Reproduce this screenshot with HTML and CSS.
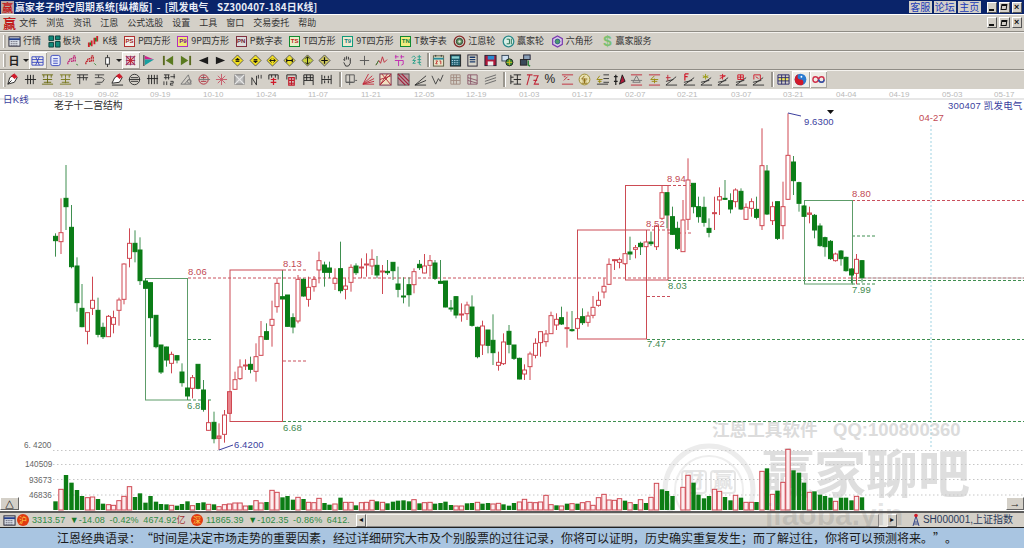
FILE: index.html
```html
<!DOCTYPE html>
<html lang="zh">
<head>
<meta charset="utf-8">
<title>赢家老子时空周期系统</title>
<link rel="stylesheet" href="styles.css">
</head>
<body>
<div class="app">
  <header class="title">
    <span class="logo">赢</span>
    <span class="title-text">赢家老子时空周期系统[纵横版] - [凯发电气  SZ300407-184日K线]</span>
    <span class="links"><a>客服</a><a>论坛</a><a>主页</a></span>
    <span class="wins"><b class="wb"><i class="min"></i></b><b class="wb"><i class="res"></i></b><b class="wb">×</b></span>
  </header>
  <nav class="menu">
    <span class="menu-logo">赢</span>
    <span>文件</span><span>浏览</span><span>资讯</span><span>江恩</span><span>公式选股</span><span>设置</span><span>工具</span><span>窗口</span><span>交易委托</span><span>帮助</span>
    <span class="wins sub"><b class="wb"><i class="min"></i></b><b class="wb"><i class="res"></i></b><b class="wb">×</b></span>
  </nav>
  <div class="bar tb1">
    <span class="it"><svg class="i" viewBox="0 0 14 14"><rect x="1" y="2" width="12" height="10" fill="#dfe3ea" stroke="#223"/><path d="M1 4.5h12" stroke="#24408c" stroke-width="2"/><path d="M3 7h8M3 9h8M3 11h8" stroke="#445" stroke-dasharray="1 1"/></svg>行情</span>
    <span class="it"><svg class="i" viewBox="0 0 14 14"><path d="M1 1h5v5H1zM8 1h5v4H8zM1 8h5v5H1zM8 7h5v6H8z" fill="#128a7a" stroke="#0b3d3a"/></svg>板块</span>
    <span class="it"><svg class="i" viewBox="0 0 14 14"><path d="M2 8v5M5 6v6M8 3v7M11 1v6" stroke="#d0202a" stroke-width="2"/><path d="M3.5 8v3M9.5 3v4" stroke="#0a8a20" stroke-width="1.5"/></svg>K线</span>
    <span class="it"><span class="bx b-ps">PS</span>P四方形</span>
    <span class="it"><span class="bx b-p9">P9</span>9P四方形</span>
    <span class="it"><span class="bx b-pn">PN</span>P数字表</span>
    <span class="it"><span class="bx b-ts">TS</span>T四方形</span>
    <span class="it"><span class="bx b-t9">T9</span>9T四方形</span>
    <span class="it"><span class="bx b-tn">TN</span>T数字表</span>
    <span class="it"><svg class="i" viewBox="0 0 14 14"><circle cx="7" cy="7" r="5.7" fill="#cfd8c8" stroke="#8a2a2a" stroke-width="1.4"/><circle cx="7" cy="7" r="3.4" fill="#5f9a5f" stroke="#333"/><circle cx="7" cy="7" r="1.3" fill="#ddd"/></svg>江恩轮</span>
    <span class="it"><svg class="i" viewBox="0 0 14 14"><circle cx="7" cy="7" r="5.7" fill="#d8efe6" stroke="#2a8a8a" stroke-width="1.4"/><path d="M5 4.5h3v5H5M10 4v6" stroke="#1a6a4a"/></svg>赢家轮</span>
    <span class="it"><svg class="i" viewBox="0 0 14 14"><path d="M7 1l5.2 3v6L7 13l-5.2-3V4z" fill="#d8c8e8" stroke="#7a3ab0" stroke-width="1.3"/><circle cx="7" cy="7" r="2.6" fill="#4a9a6a" stroke="#2a5a8a"/></svg>六角形</span>
    <span class="it svc"><span class="dollar">$</span>赢家服务</span>
  </div>
  <div class="bar tb2">
    <span class="day">日</span><span class="caret"></span>
    <span class="btn on"><svg class="i" viewBox="0 0 14 14"><path d="M1 3h12v9H1zM1 6h12M1 9h12M5 3l4 9M9 3l-4 9" stroke="#3a4ac0"/></svg></span>
    <span class="btn"><svg class="i" viewBox="0 0 14 14"><rect x="2" y="1.5" width="10" height="11" rx="2" fill="#e8ecfa" stroke="#3a4ac0"/><path d="M4.5 5h5M4.5 7.500h5M4.500 10h5" stroke="#3a4ac0"/></svg></span>
    <span class="btn"><svg class="i" viewBox="0 0 14 14"><path d="M2 11V8h2V5h2v3h2V2h2v6" stroke="#c02a7a" stroke-dasharray="2 1" stroke-width="1.4"/><path d="M11 11l2 1" stroke="#3a8a3a"/></svg></span>
    <span class="btn"><svg class="i" viewBox="0 0 14 14"><path d="M2 11V8h2V5h2v3h2V2h2v6" stroke="#c0202a" stroke-dasharray="2 1" stroke-width="1.4"/><path d="M11 10l2 2" stroke="#3a8a3a"/></svg></span>
    <span class="btn"><svg class="i" viewBox="0 0 14 14"><rect x="5" y="4" width="4" height="7" fill="#fff" stroke="#333"/><path d="M7 1v3M7 11v3" stroke="#333"/></svg></span><span class="caret c2"></span>
    <span class="btn on"><svg class="i" viewBox="0 0 14 14"><path d="M2 2l10 10M12 2L2 12M2 7h10M7 2v10" stroke="#c02a3a" stroke-width="1.3"/><rect x="3" y="3" width="8" height="8" stroke="#8a3a7a"/></svg></span>
    <span class="btn"><svg class="i" viewBox="0 0 14 14"><path d="M2 1v12" stroke="#444" stroke-width="1.4"/><path d="M3 2l10 4H3z" fill="#d0208a" stroke="none"/><path d="M3 6h10l-10 6z" fill="#18a0a0" stroke="none"/></svg></span>
    <span class="gap3"></span>
    <span class="btn"><svg class="i" viewBox="0 0 14 14"><path d="M2 2v10" stroke="#5a6a20" stroke-width="2"/><path d="M12 2v10L4 7z" fill="#5a7a20" stroke="none"/></svg></span>
    <span class="btn"><svg class="i" viewBox="0 0 14 14"><path d="M12 2v10" stroke="#5a6a20" stroke-width="2"/><path d="M2 2v10l8-5z" fill="#5a7a20" stroke="none"/></svg></span>
    <span class="btn"><svg class="i" viewBox="0 0 14 14"><path d="M12 3v8L2 7z" fill="#1c1c1c" stroke="none"/></svg></span>
    <span class="btn"><svg class="i" viewBox="0 0 14 14"><path d="M2 3v8l10-4z" fill="#1c1c1c" stroke="none"/></svg></span>
    <span class="btn"><svg class="i" viewBox="0 0 14 14"><path d="M7 1l6 6-6 6-6-6z" fill="#f2e020" stroke="#555"/><path d="M7 4.500l2 2H5zM5 8h4" fill="#111" stroke="#111"/></svg></span>
    <span class="btn"><svg class="i" viewBox="0 0 14 14"><path d="M7 1l6 6-6 6-6-6z" fill="#f2e020" stroke="#555"/><path d="M7 9.500l2-2H5zM5 6h4" fill="#111" stroke="#111"/></svg></span>
    <span class="btn"><svg class="i" viewBox="0 0 14 14"><path d="M7 1l6 6-6 6-6-6z" fill="#f2e020" stroke="#555"/><path d="M4 7h6M4 7l2-2M4 7l2 2M10 7L8 5M10 7L8 9" stroke="#111"/></svg></span>
    <span class="btn"><svg class="i" viewBox="0 0 14 14"><path d="M7 1l6 6-6 6-6-6z" fill="#e8dc30" stroke="#555"/><path d="M4 5v4M10 5v4M4 7h6" stroke="#111" stroke-width="1.300"/></svg></span>
    <span class="btn"><svg class="i" viewBox="0 0 14 14"><path d="M7 1l6 6-6 6-6-6z" fill="#c8d040" stroke="#555"/><path d="M7 3v8M5 5l2-2 2 2M5 9l2 2 2-2" stroke="#111"/></svg></span>
    <span class="btn"><svg class="i" viewBox="0 0 14 14"><path d="M7 1l6 6-6 6-6-6z" fill="#d0c860" stroke="#555"/><path d="M3.500 7h7M7 3.500v7" stroke="#111" stroke-width="1.300"/></svg></span>
    <span class="gap5"></span>
    <span class="btn"><svg class="i" viewBox="0 0 14 14"><path d="M4 7V3.500M6 6V2.500M8 6V3M10 7V4.500M4 7L2.500 6M10 6.500V10l-2 3H5L3 9" stroke="#333"/></svg></span>
    <span class="btn"><svg class="i" viewBox="0 0 14 14"><path d="M7 2v10M2 7h10" stroke="#555"/></svg></span>
    <span class="btn"><svg class="i" viewBox="0 0 14 14"><path d="M1 12l3-5 2 3 2-7 2 6 3-3" stroke="#c02a3a"/><path d="M1 12l3-5" stroke="#2a8a3a"/></svg></span>
    <span class="btn"><svg class="i" viewBox="0 0 14 14"><path d="M2 3h4M3 1v4M8 3h4M9 1v4M2 7h9v4l-2 1M6 7v6" stroke="#c02ab0"/></svg></span>
    <span class="btn"><svg class="i" viewBox="0 0 14 14"><path d="M2 4l2-2 2 2-3 3h3l-3 3h3M8 3h4M8 6h4M10 1v10l2 1M8 9h4" stroke="#2aa08a"/></svg></span>
    <span class="sep s4"></span>
    <span class="btn"><svg class="i" viewBox="0 0 14 14"><rect x="1.500" y="2" width="11" height="11" fill="#e8e4c8" stroke="#5a5a40"/><path d="M1.500 5h11" stroke="#2a8a9a" stroke-width="2"/><path d="M4 1v2M10 1v2" stroke="#333"/><path d="M4 7.500h2l-2 3h2M8 7.500h1.500v3.500" stroke="#c02a2a"/></svg></span>
    <span class="btn"><svg class="i" viewBox="0 0 14 14"><rect x="1.500" y="1" width="11" height="12" fill="#1a5a6a" stroke="#222"/><rect x="3" y="2.500" width="8" height="2.500" fill="#8ad0d0" stroke="none"/><path d="M3 7h8M3 9h8M3 11h8" stroke="#bde" stroke-dasharray="1.500 1"/></svg></span>
    <span class="btn"><svg class="i" viewBox="0 0 14 14"><rect x="2" y="1" width="10" height="12" fill="#d8d4c8" stroke="#223"/><path d="M4 3.500h6M4 6h6M4 8.500h6" stroke="#1a3a6a" stroke-width="1.400"/></svg></span>
    <span class="btn"><svg class="i" viewBox="0 0 14 14"><rect x="1" y="1.500" width="12" height="11" fill="#b01a3a" stroke="#223"/><rect x="4" y="2" width="7" height="4" fill="#2a8ad0" stroke="none"/><rect x="4" y="8" width="6" height="4.500" fill="#eee" stroke="none"/></svg></span>
    <span class="btn"><svg class="i" viewBox="0 0 14 14"><rect x="1" y="1.500" width="7" height="6" fill="#cfe0f0" stroke="#345"/><circle cx="9" cy="9" r="3.800" fill="#3a8a3a" stroke="#222"/><path d="M6 9h6M9 6v6" stroke="#d8c020"/></svg></span>
    <span class="btn"><svg class="i" viewBox="0 0 14 14"><rect x="5" y="1" width="7" height="5" fill="#8aa0b8" stroke="#223"/><rect x="1.500" y="6" width="7" height="6" fill="#3a4a5a" stroke="#222"/><path d="M10 7v5l2 1" stroke="#2a8a3a" stroke-width="1.400"/></svg></span>
  </div>
  <div class="bar tb3">
    <span class="btn"><svg class="i" viewBox="0 0 14 14"><path d="M2 12l2-7 5-3 3 3-3 5z" fill="#fff" stroke="#222"/><path d="M6 3l3-2 3 3-3 2z" fill="#d01a2a" stroke="#d01a2a"/><path d="M2 12l4-4" stroke="#222"/></svg></span>
    <span class="btn"><svg class="i" viewBox="0 0 14 14"><path d="M4 2v10M7 2v10M10 2v10M1 7h12" stroke="#222"/></svg></span>
    <span class="btn"><svg class="i" viewBox="0 0 14 14"><path d="M1 2h12M3 2v3M7 2v3M11 2v3M2 7h10M3 10h8M7 5v6M1 12h12" stroke="#6a6a10"/></svg></span>
    <span class="btn"><svg class="i" viewBox="0 0 14 14"><path d="M1 2h12M3 2v3M7 2v3M11 2v3M2 7h10M3 10h8M7 5v6M1 12h12" stroke="#7a7a20"/></svg></span>
    <span class="btn"><svg class="i" viewBox="0 0 14 14"><path d="M1 2h12M1 5h12M4 2v10M8 2v6M11 5v3" stroke="#333"/></svg></span>
    <span class="btn"><svg class="i" viewBox="0 0 14 14"><path d="M2 2h10M2 5h8l2 2-2 3H4M6 2v3M2 12h6" stroke="#444"/></svg></span>
    <span class="btn"><svg class="i" viewBox="0 0 14 14"><path d="M1 11l3-6 5-3 3 3-3 5z" fill="#fff" stroke="#222"/><path d="M6 3l3-2 3 3-3 2z" fill="#d01a2a" stroke="#d01a2a"/><path d="M1 13h12" stroke="#222"/></svg></span>
    <span class="btn"><svg class="i" viewBox="0 0 14 14"><circle cx="7" cy="7" r="5.600" stroke="#333"/><path d="M1 7h12M3 5h8M3 9h8" stroke="#333"/></svg></span>
    <span class="btn"><svg class="i" viewBox="0 0 14 14"><path d="M3 2v10M6 2v10M9 2v10M12 2v10M1 6h12" stroke="#222"/></svg></span>
    <span class="btn"><svg class="i" viewBox="0 0 14 14"><path d="M1 2h6M1 5h6M3 2v5M6 2v5M1 9v4M4 9v4M8 4h5M12 1v5M8 9h3v2H8v2h3" stroke="#333"/></svg></span>
    <span class="btn"><svg class="i" viewBox="0 0 14 14"><path d="M1 12L9 2l3 10zM5 12l4-5" stroke="#777"/><circle cx="10" cy="9" r="2" stroke="#777"/></svg></span>
    <span class="btn"><svg class="i" viewBox="0 0 14 14"><circle cx="6" cy="7" r="5" stroke="#b02a3a"/><path d="M1 7h12M6 2v6" stroke="#777"/><path d="M3 5h6M3 9h6" stroke="#b02a3a"/></svg></span>
    <span class="btn"><svg class="i" viewBox="0 0 14 14"><path d="M1 7h12M7 1v12M3 3l8 8M11 3l-8 8" stroke="#c85a6a"/></svg></span>
    <span class="btn"><svg class="i" viewBox="0 0 14 14"><rect x="2" y="2" width="10" height="10" fill="#bbb" stroke="#777"/><path d="M2 2l10 10M12 2L2 12" stroke="#e8e8e8" stroke-width="1.300"/></svg></span>
    <span class="btn"><svg class="i" viewBox="0 0 14 14"><path d="M2 13V5l5 8V3M9 2v4M12 2v4" stroke="#333"/></svg></span>
    <span class="btn"><svg class="i" viewBox="0 0 14 14"><path d="M2 2h10M2 2v5M12 2v5M5 2v3M9 2v3" stroke="#222"/><path d="M7 5v8M4 7h6M4 10h6" stroke="#d01a2a" stroke-width="1.300"/></svg></span>
    <span class="btn"><svg class="i" viewBox="0 0 14 14"><path d="M2 2h10M2 2v5M12 2v5" stroke="#222"/><path d="M4 5h6v8H4zM4 8h6M4 11h6M7 5v8" stroke="#c01a2a" stroke-width="1.200"/></svg></span>
    <span class="btn"><svg class="i" viewBox="0 0 14 14"><path d="M2 2h10v6H2zM2 5h10M5 2v6M9 2v6M2 8v5M12 8v5" stroke="#222"/></svg></span>
    <span class="btn"><svg class="i" viewBox="0 0 14 14"><path d="M2 2v10M12 2v10M2 7h10M5 3v3M9 3v3M5 8v3M9 8v3" stroke="#222"/></svg></span>
    <span class="sep s7"></span>
    <span class="btn"><svg class="i" viewBox="0 0 14 14"><path d="M1 2h9v8H1zM5 2v11M1 10h8M11 8h2" stroke="#555"/></svg></span>
    <span class="btn"><svg class="i" viewBox="0 0 14 14"><path d="M1 12L7 1M1 12L11 3M1 12L13 6M1 12l12 0M1 12L13 9" stroke="#c02a3a"/></svg></span>
    <span class="btn"><svg class="i" viewBox="0 0 14 14"><rect x="1" y="1" width="12" height="12" fill="#f0e0c0" stroke="#702a4a"/><path d="M1 13L13 1M1 7l12-4M1 13l8-12M3 1l10 12" stroke="#b02a3a"/></svg></span>
    <span class="btn"><svg class="i" viewBox="0 0 14 14"><rect x="1" y="1" width="12" height="12" fill="#b89aa0" stroke="#555"/><path d="M1 1l12 12M1 5l8 8M5 1l8 8" stroke="#a0203a" stroke-width="1.300"/></svg></span>
    <span class="btn"><svg class="i" viewBox="0 0 14 14"><path d="M1 13L13 3M1 13l12-5M1 13h12" stroke="#333"/></svg></span>
    <span class="btn"><svg class="i" viewBox="0 0 14 14"><path d="M1 3l4 9 3-6 2 3 3-7" stroke="#444"/></svg></span>
    <span class="btn"><svg class="i" viewBox="0 0 14 14"><path d="M2 2h10v10H2zM2 5h10M2 8h10M5 2v10M8 2v10" stroke="#a08a80"/></svg></span>
    <span class="btn"><svg class="i" viewBox="0 0 14 14"><path d="M2 2h10v10H2zM2 5l10 3M2 8l10 3M5 2v10" stroke="#8a5a6a"/></svg></span>
    <span class="btn"><svg class="i" viewBox="0 0 14 14"><path d="M1 6l12-4M1 9l12-4M1 12l12-4" stroke="#666"/></svg></span>
    <span class="sep s7"></span>
    <span class="btn"><svg class="i" viewBox="0 0 14 14"><path d="M2 2v10M5 2h8M5 7h8M5 12h8M2 4.500h3M2 9.500h3M9 2v10" stroke="#222"/></svg></span>
    <span class="btn"><svg class="i" viewBox="0 0 14 14"><path d="M1 2h6M4 2L1 13M8 3l5 0-4 9h5M8 8h4" stroke="#c02a3a" stroke-width="1.200"/></svg></span>
    <span class="btn pct">%</span>
    <span class="btn"><svg class="i" viewBox="0 0 14 14"><path d="M1 2h12M1 12h12M3 8l4-4M3 4h2M7 7h2" stroke="#c02a3a"/></svg></span>
    <span class="btn"><svg class="i" viewBox="0 0 14 14"><circle cx="7" cy="7" r="5.800" fill="#e8e0b0" stroke="#9a8a30"/><path d="M7 3L4 6.500h6M5 8.500h4M7 6v5M4 11h6" stroke="#8a6a10"/></svg></span>
    <span class="btn"><svg class="i" viewBox="0 0 14 14"><path d="M8 2h6M8 6h6M8 10h6M1 12h12" stroke="#333"/><path d="M4 3L1 7h6M2 9h4M4 7v4" stroke="#9a8a10"/></svg></span>
    <span class="btn"><svg class="i" viewBox="0 0 14 14"><path d="M3 2v11M1 4h4M1 9h4" stroke="#222" stroke-width="1.300"/><path d="M7 12l3-10 3 7z" fill="#b01a3a" stroke="#222"/></svg></span>
    <span class="btn"><svg class="i" viewBox="0 0 14 14"><path d="M1 2h12M1 13h12" stroke="#c02a3a"/><path d="M7 3l-4 7h8zM1 8h12" stroke="#777"/></svg></span>
    <span class="btn"><svg class="i" viewBox="0 0 14 14"><path d="M1 2h12M1 13h12" stroke="#c02a3a"/><path d="M7 3L3 7h8M4 9h6M7 6v5" stroke="#9a8a10"/></svg></span>
    <span class="btn"><svg class="i" viewBox="0 0 14 14"><path d="M1 13L12 4M1 13h12M1 9l8-2" stroke="#333"/><path d="M3 2v6M1 5h5" stroke="#c02a3a"/></svg></span>
    <span class="btn"><svg class="i" viewBox="0 0 14 14"><path d="M1 13L12 5M1 13h12M1 10l9-2" stroke="#333"/><path d="M2 1h4M2 1v7M2 4h3" stroke="#d01a2a" stroke-width="1.300"/></svg></span>
    <span class="btn"><svg class="i" viewBox="0 0 14 14"><path d="M1 13L12 5M1 13h12M1 10l9-2" stroke="#333"/><path d="M6 1v6M3 3l6 2M3 5l6-2" stroke="#9a9a10"/></svg></span>
    <span class="btn"><svg class="i" viewBox="0 0 14 14"><path d="M1 13L12 5M1 13h12M1 10l9-2" stroke="#333"/><path d="M3 3h6M6 1v6M3 6l6-3" stroke="#d01a2a"/></svg></span>
    <span class="btn"><svg class="i" viewBox="0 0 14 14"><path d="M1 13L12 5M1 13h12M1 10l9-2" stroke="#333"/><path d="M3 2h6v5H3zM3 4.500h6M6 2v5" stroke="#d01a2a"/></svg></span>
    <span class="btn"><svg class="i" viewBox="0 0 14 14"><path d="M1 13L12 5M1 13h12M1 10l9-2" stroke="#333"/><path d="M2 2h7M2 2v5M9 2v5M4 4l3 2" stroke="#d01a2a"/></svg></span>
    <span class="sep s7"></span>
    <span class="btn"><svg class="i" viewBox="0 0 14 14"><rect x="2" y="5" width="10" height="3.500" fill="#f2e85a" stroke="none"/><path d="M1 2h12v10H1zM1 5h12M1 8.500h12M5 2v10M9 2v10" stroke="#2a2a6a"/></svg></span>
    <span class="btn on"><svg class="i" viewBox="0 0 14 14"><circle cx="7" cy="7" r="6.300" fill="#2a7ad0" stroke="none"/><path d="M7 .700a6.300 6.300 0 0 0 0 12.600 3.150 3.150 0 0 0 0-6.300 3.150 3.150 0 0 1 0-6.300z" fill="#d01a2a" stroke="none"/><circle cx="8" cy="4" r="1" fill="#fff" stroke="none"/></svg></span>
    <span class="btn on"><svg class="i" viewBox="0 0 14 14"><path d="M1 7c0-4 5-4 6 0s6 4 6 0-5-4-6 0-6 4-6 0z" stroke="#d0304a" stroke-width="1.500"/><path d="M7 7c1 4 6 4 6 0" stroke="#2a5ab0" stroke-width="1.500"/></svg></span>
  </div>
  <main class="chart">
    <svg id="chart" class="plot" viewBox="0 89 1024 422" xmlns="http://www.w3.org/2000/svg">
      <g class="wm-art">
        <circle cx="709" cy="490" r="44" class="wm-ring"/>
        <circle cx="709" cy="490" r="34" class="wm-ring2"/>
        <rect x="682" y="471" width="24" height="22" rx="3" class="wm-box"/>
        <rect x="711" y="471" width="24" height="22" rx="3" class="wm-box"/>
        <text x="684" y="488" class="wm-s">财</text>
        <text x="713" y="488" class="wm-s">赢</text>
        <text x="712" y="436" class="wm-a">江恩工具软件</text>
        <text x="833" y="436" class="wm-q">QQ:100800360</text>
        <text x="762" y="493" class="wm-b">赢家聊吧</text>
      </g>
      <path class="axis" d="M0 99H1024"/>
      <g class="dates">
        <text x="53" y="97">08-19</text><text x="98" y="97">09-02</text><text x="150" y="97">09-19</text><text x="203" y="97">10-10</text><text x="256" y="97">10-24</text><text x="308" y="97">11-07</text><text x="361" y="97">11-21</text><text x="414" y="97">12-05</text><text x="466" y="97">12-19</text><text x="519" y="97">01-03</text><text x="572" y="97">01-17</text><text x="625" y="97">02-07</text><text x="677" y="97">02-21</text><text x="731" y="97">03-07</text><text x="783" y="97">03-21</text><text x="836" y="97">04-04</text><text x="889" y="97">04-19</text><text x="942" y="97">05-03</text><text x="994" y="97">05-17</text>
      </g>
      <text x="3" y="103" class="blue-t">日K线</text>
      <text x="54" y="109" class="lao">老子十二宫结构</text>
      <text x="948" y="109" class="blue-t">300407 凯发电气</text>
      <path class="grid" d="M53 450.500H1024M53 464.500H1024M53 479.500H1024M53 495H1024"/>
      <g class="axt"><text x="24" y="448">6. 4200</text><text x="25" y="467">140509</text><text x="29" y="483">93673</text><text x="29" y="498">46836</text></g>
      <path class="vline" d="M931 125V448"/>
      <path class="red-dash" d="M188 278H1024M852 200.500H1024M668 185.500H694M283 270H308M283 361H308M647 230H672M647 296.500H672M668 233H693"/>
      <path class="grn-dash" d="M283 421.500H1024M647 339.500H1024M668 280.500H1024M188 339.500H213M188 400H213M852 236H877M852 284H877"/>
      <path class="gray-line" d="M860 278H1024"/>
      <rect class="box-g" x="145.500" y="278.500" width="42" height="121.500"/>
      <rect class="box-g" x="804.500" y="200.500" width="48" height="83.500"/>
      <rect class="box-r" x="230" y="270" width="52.500" height="151.500"/>
      <rect class="box-r" x="577.500" y="230" width="69" height="109"/>
      <rect class="box-r" x="625.500" y="185.500" width="42.500" height="94.500"/>
      <g id="vols"></g>
      <g id="candles"></g>
      <path class="blue-l" d="M219 450l14-5M788 113l13 3"/>
      <path class="mark" d="M827 110h7l-3.500 4z"/>
      <g class="lbl">
        <text x="188" y="275" class="r">8.06</text>
        <text x="283" y="267" class="r">8.13</text>
        <text x="187" y="409" class="g">6.8</text>
        <text x="283" y="431" class="g">6.68</text>
        <text x="647" y="347" class="g">7.47</text>
        <text x="667" y="182" class="r">8.94</text>
        <text x="646" y="227" class="r">8.52</text>
        <text x="668" y="289" class="g">8.03</text>
        <text x="852" y="197" class="r">8.80</text>
        <text x="852" y="293" class="g">7.99</text>
        <text x="804" y="125" class="b">9.6300</text>
        <text x="234" y="448" class="b">6.4200</text>
        <text x="919" y="121" class="r">04-27</text>
      </g>
    </svg>
    <span class="corner left">△</span>
    <span class="corner right">→</span>
  </main>
  <footer class="status">
    <span class="cal"><svg class="i" viewBox="0 0 14 14"><rect x="1" y="2" width="12" height="10" fill="#d8dce4" stroke="#223"/><path d="M1 4.500h12" stroke="#24408c" stroke-width="2"/><path d="M3 7h8M3 9h8M3 11h8" stroke="#445" stroke-dasharray="1 1"/></svg></span>
    <span class="coin">沪</span>
    <span class="q q1">3313.57 <em>▼</em>-14.08 -0.42% 4674.92<b>亿</b></span>
    <span class="coin c2">深</span>
    <span class="q q2">11865.39 <em>▼</em>-102.35 -0.86% 6412.</span>
    <span class="scroll"><i class="arrow">◂</i><i class="thumb"></i><i class="arrow">▸</i></span>
    <span class="idx"><svg class="ant" viewBox="0 0 10 14"><path d="M5 3L2 13M5 3l3 10M3 9h4M2.500 11h5" stroke="#3a4a8a" fill="none"/><circle cx="5" cy="2.500" r="1.800" fill="#d01a2a"/></svg>SH000001,上证指数</span>
  </footer>
  <div class="wm-over">jiaoba.yin</div>
  <div class="quote">江恩经典语录：<span class="qm">“</span>时间是决定市场走势的重要因素，经过详细研究大市及个别股票的过往记录，你将可以证明，历史确实重复发生；而了解过往，你将可以预测将来。<span class="qm">”</span>。</div>
</div>
<script src="chart.js"></script>
</body>
</html>
```
FILE: styles.css
```css
*{box-sizing:border-box;margin:0;padding:0}
html,body{width:1024px;height:548px;overflow:hidden;background:#d4d0c8}
body{font-family:"Noto Sans CJK SC","Liberation Sans",sans-serif;color:#2b2b2b}
.app{position:relative;width:1024px;height:548px;display:flex;flex-direction:column}
.title{height:14px;background:#0a246a;display:flex;align-items:center;color:#fff;flex:none}
.logo{width:13px;height:13px;margin-left:1px;background:#b8a4a0;color:#c01a1a;font-size:11px;font-weight:700;line-height:13px;text-align:center}
.title-text{margin-left:1px;font-size:9.900px;font-weight:700;line-height:13px;white-space:pre;color:#e8ecf6;word-spacing:1.800px;letter-spacing:.12px}
.links{margin-left:auto;display:flex;gap:2px}
.links a{width:22.500px;height:12px;background:#d4d0c8;color:#1a3ab8;font-size:10px;line-height:12px;text-align:center}
.wins{display:flex;gap:2px;margin:0 2px 0 6px}
.wb{width:10.500px;height:11px;background:#d4d0c8;border:1px solid #fff;border-right-color:#555;border-bottom-color:#555;color:#111;font-size:9px;line-height:9px;text-align:center;display:flex;align-items:center;justify-content:center;font-family:"Liberation Sans",sans-serif}
.min{width:5px;height:2px;background:#111;margin-top:5px}
.res{width:6px;height:6px;border:1px solid #111;border-top-width:2px;display:block;transform:skewX(-8deg)}
.menu{height:17px;flex:none;display:flex;align-items:center;gap:9px;font-size:9px;box-shadow:inset 0 1px #fff;color:#333}
.menu span{line-height:15px}
.menu-logo{width:12px;margin:0 -4.800px 0 3px;color:#c01a1a;font-size:13px;font-weight:700;text-align:center}
.wins.sub{margin-left:auto;margin-right:2px;gap:2px}
.bar{flex:none;display:flex;align-items:center;border-top:1px solid #8f8c85;box-shadow:inset 0 1px #f4f2ee;position:relative}
.bar::before{content:"";position:absolute;left:3px;top:3px;bottom:2px;width:2px;background:#b4b0a8;border-left:1px solid #fff}
.tb1{height:19px;padding-left:8px;gap:6.700px;font-size:9px;color:#333}
.tb2{height:19px;padding-left:5px}
.tb3{height:20px;padding-left:4.300px}
.it{display:flex;align-items:center;gap:2px;line-height:14px;white-space:nowrap}
.i{width:13px;height:13px;fill:none;display:block;flex:none}
.bx{width:11px;height:11px;border:1px solid;font:700 6px/9px "Liberation Sans",sans-serif;text-align:center;flex:none;margin-right:1px}
.b-ps{border-color:#b03030;color:#a02020;background:#f2eee8}
.b-p9{border-color:#b030c0;color:#701090;background:#f2e870}
.b-pn{border-color:#803040;color:#702030;background:#dcdcdc}
.b-ts{border-color:#108a30;color:#c02020;background:#e8f0c8}
.b-t9{border-color:#109a7a;color:#108080;background:#f0e8d0}
.b-tn{border-color:#108a30;color:#108040;background:#f2ec80}
.dollar{width:12px;font:700 15px/14px "Liberation Sans",sans-serif;color:#7ac070;text-align:center}
.svc{margin-left:2px}
.day{width:18px;font-size:11px;font-weight:700;text-align:center;color:#222}
.caret{width:6px;height:3px;border:3px solid transparent;border-top-color:#222;border-bottom:0;margin-right:.3px;flex:none}
.caret.c2{margin-right:0}
.btn{width:17.400px;height:17px;display:flex;align-items:center;justify-content:center;flex:none}
.btn.on{background:#eeece6;box-shadow:inset 1px 1px #fff,inset -1px -1px #a8a49c}
.gap3{width:2.500px}
.gap5{width:5px}
.sep{flex:none;align-self:stretch;position:relative}
.sep::after{content:"";position:absolute;left:50%;top:2px;bottom:2px;width:2px;background:#9a968e;border-right:1px solid #fff}
.s4{width:4px}
.s7{width:7.600px}
.pct{font:12px/17px "Liberation Sans",sans-serif;color:#222}
.chart{position:relative;flex:none;height:422px;background:#fff}
.plot{display:block;width:1024px;height:422px;font-family:"Liberation Sans","Noto Sans CJK SC",sans-serif}
.axis{stroke:#cfcfcf;fill:none}
.dates text{font-size:8px;fill:#b9b9b9}
.blue-t{font-size:9.500px;fill:#3b3f9e;letter-spacing:.2px}
.lao{font-size:9.800px;fill:#2d2d2d;font-family:"Noto Sans CJK SC",sans-serif}
.grid{stroke:#c6c6c6;stroke-dasharray:1.500 2.500;fill:none}
.axt text{font-size:8.200px;fill:#666}
.vline{stroke:#9fd3e2;stroke-dasharray:2 2;fill:none}
.red-dash{stroke:#c9505c;stroke-dasharray:3 2;fill:none}
.grn-dash{stroke:#3f8f50;stroke-dasharray:3 2;fill:none}
.gray-line{stroke:#bdbdbd;fill:none}
.box-g{fill:none;stroke:#5d9c69}
.box-r{fill:none;stroke:#cc4b54}
.blue-l{fill:none;stroke:#3b3f9e}
.mark{fill:#111}
.lbl text{font-size:9.500px;letter-spacing:.1px}
.lbl .r{fill:#c24a54}
.lbl .g{fill:#3f8a50}
.lbl .b{fill:#3b3f9e}
.wk-r{stroke:#cf4852}
.wk-g{stroke:#3f8f50}
.c-r{fill:#fff;stroke:#cf4852}
.c-f{fill:#e8828a;stroke:#cf4852}
.c-g{fill:#0b7d17;stroke:#0b7d17}
.v-r{fill:#fdeef0;stroke:#cf4852}
.v-g{fill:#0c7d14;stroke:none}
.wm-ring{fill:none;stroke:#ececec;stroke-width:5}
.wm-ring2{fill:none;stroke:#eeeeee;stroke-width:2}
.wm-box{fill:none;stroke:#e6e6e6;stroke-width:2}
.wm-s{font-size:20px;fill:#e4e4e4;font-family:"Noto Sans CJK SC",sans-serif;font-weight:700}
.wm-a{font-size:17.600px;font-weight:700;fill:#dcdcdc;font-family:"Noto Sans CJK SC",sans-serif}
.wm-q{font-size:18.500px;font-weight:700;fill:#dcdcdc}
.wm-b{font-size:52px;font-weight:700;fill:#dedede;font-family:"Noto Sans CJK SC",sans-serif}
.corner{position:absolute;bottom:1px;width:19px;height:13px;background:#d4d0c8;border:1px solid #fff;border-right-color:#666;border-bottom-color:#666;font:11px/10px "Liberation Sans","DejaVu Sans",sans-serif;text-align:center;color:#222}
.left{left:0}
.right{right:0;width:18px}
.status{height:17px;flex:none;display:flex;align-items:center;border-top:2px solid #5c5c5c;border-bottom:1px solid #222;font:9px/14px "Liberation Sans","Noto Sans CJK SC",sans-serif;color:#2f8a46;background:#d4d0c8;white-space:pre}
.cal{margin-left:3px}
.coin{width:12px;height:12px;border-radius:50%;background:#e03a10;color:#ffd24a;font:8px/12px "Noto Sans CJK SC",sans-serif;text-align:center;margin-left:1px;flex:none}
.coin.c2{margin-left:0}
.q{word-spacing:2px;letter-spacing:.1px}
.q1{margin-left:3px;width:159px}
.q2{margin-left:3px;width:150px;overflow:hidden}
.q em{font-style:normal;color:#1a7a2a}
.q b{font-weight:400;color:#a03030;font-family:"Noto Sans CJK SC",sans-serif}
.scroll{display:flex;align-items:center;width:541px;height:13px;background:#e8e6e0;flex:none}
.scroll i{display:block}
.arrow{width:10px;height:13px;background:#d4d0c8;border:1px solid #fff;border-right-color:#666;border-bottom-color:#666;font:8px/10px "Liberation Sans",sans-serif;color:#111;text-align:center;font-style:normal}
.thumb{flex:1;height:13px;background:#d4d0c8;border:1px solid #f4f2ee;border-right-color:#888;border-bottom-color:#888;margin-right:8px}
.idx{margin-left:auto;display:flex;align-items:center;gap:2px;padding-right:11px;color:#2a3a5a;font-size:10px}
.ant{width:10px;height:14px}
.wm-over{position:absolute;left:765px;top:497px;font:700 30px/36px "Liberation Sans",sans-serif;color:rgba(90,90,90,.16);pointer-events:none}
.quote{position:relative;flex:1;background:#a9c5e1;font-size:12px;line-height:20px;padding-left:57px;white-space:nowrap;color:#1a1a1a}
.qm{display:inline-block;width:12px;text-align:center}
```
FILE: chart.js
```js
// [colour, wickTop, bodyTop, bodyBottom, wickBottom], y measured from a section origin at 1/3 px
var A = ["g250,259,272,320","r145,248,275,312","g45,145,170,240","g165,232,350,355","g322,348,458,485","g402,475,530,532","r488,488,544,583","r380,451,475,495","g443,481,553,562","g518,532,560,567","r495,499,560,560","r482,503,523,550","r443,450,481,527","r340,342,448,463","r235,280,325,352","g241,280,305,337","g262,300,392,405","g385,393,415,415","g398,398,503,560","g495,496,590,595","g585,585,666,672","g590,591,630,650","r605,613,640,670","g615,617,630,640","g640,666,698,710","g712,714,738,750","r675,683,715,745","g643,643,715,718","g690,720,778,785","r750,818,841,842","g785,817,866,880","f820,858,865,900","r780,795,853,878","f725,725,790,790","r665,689,718,720","r628,651,686,690","r628,645,648,660","g620,643,658,670","r580,620,664,695","r513,560,616,617","g520,545,568,570","r452,508,526,590","r383,400,470,488","g362,440,447,445","g435,435,529,530","g490,503,531,550","r375,388,513,520","g385,388,438,440","r380,412,448,470","r378,388,410,425","r305,332,360,400","g335,345,367,410","g335,354,367,385","r355,385,400,420"];
var B = ["g215,296,362,370","r325,348,358,388","r283,292,337,365","g280,288,308,315","f265,291,293,325","f250,282,284,320","r238,268,288,315","g258,286,315,325","f285,303,305,372","g270,304,308,315","g277,277,302,330","g290,342,358,382","g322,378,380,400","g322,344,374,410","r295,305,344,370","g270,283,293,300","r252,288,309,310","r255,272,286,320","g270,279,325,330","g270,334,340,340","g333,333,411,412","g390,414,416,425","g378,380,435,445","f400,432,434,455","r395,405,431,450","g376,411,466,470","g470,472,560,565","r452,468,525,555","g480,480,526,550","g433,511,548,585","r545,577,586,602","r490,516,581,585","g465,484,523,550","g525,525,565,570","g563,565,627,628","r583,600,612,630","r545,552,590,630","r505,520,556,565","r485,485,518,560","r480,492,515,530","r425,437,491,490","r430,448,465,480","g410,443,462,465","f425,473,475,533","g423,479,481,485","r440,446,475,482","g415,440,458,465","r425,438,457,470","r378,412,436,445","r365,391,406,410","r325,349,366,385","r265,283,343,345","f268,269,271,300","r263,269,277,295","r250,251,281,285","g200,246,252,270","r225,233,238,265","g215,220,230,255","r215,216,230,230","g185,216,221,228","r165,168,230,240"];
var C = ["r255,278,355,360","g278,278,345,385","g320,350,403,405","g365,385,445,450","r300,360,455,455","r175,240,358,390","g250,250,320,340","g290,320,350,368","g290,322,367,380","g355,385,397,412","f290,338,341,390","r262,290,300,345","g240,295,296,300","g280,302,327,340","r265,270,305,322","g265,274,327,330","r310,322,358,360","r295,305,325,350","g290,328,352,358","r85,197,377,390","g195,213,342,345","r305,320,362,375","g305,305,415,420","r245,320,377,418","r40,166,298,300","g168,186,242,285","g245,248,310,335","g315,318,349,350","f320,339,343,370","g342,346,390,415","g370,378,437,440","g410,413,440,470","g420,424,476,480","r458,462,482,485","g450,453,476,497","g470,472,512,515","g505,507,525,550","r462,478,520,553","g480,482,533,548"];
// volume tops: zoom-coordinates with origin noted
var V1 = "g214 r178 g135 g158 g180 g198 r203 r201 g207 g221 r224 r226 r212 r199 r170 g201 g190 g218 g198 g215 g222 g223 r226 g227 g222 g214 r227 g219 g217 r223 g223 r230 r224 r222 r219 r219 r228 g226 r212 r219 g216 r181 r187 g202 g198 g209 r202 g207 r217 r218 r205 g219 g224 r222".split(" ");
var V2 = "g203 r217 r217 g226 r218 r217 r211 g214 r217 g220 g215 g212 g211 g214 r209 g220 r218 r217 g221 g219 g215 g225 r228 r228 g220 g219 r217 g221 g219 r222 r220 g223 g227 g219 r216 r208 r217 r218 r216 r196 r224 g226 r228 g221 r221 g221 r218 r215 r226 r203 r193 r210 r211 r206 g212 r218 g222 r209 g219 r202 r160 g178 g183 g198".split(" ");
var V3 = "r232 r196 g218 g254 g265 g258 r238 r244 g261 g271 r256 g263 r277 r277 g276 r184 g175 r253 g242 r217 r118 g181 g188 g218 r247 g244 g254 g258 g263 r274 g263 g263 g271 r259 g262".split(" ");

var NS = "http://www.w3.org/2000/svg";
function el(parent, name, attrs) {
  var n = document.createElementNS(NS, name);
  for (var k in attrs) n.setAttribute(k, attrs[k]);
  parent.appendChild(n);
}
function xAt(i) { return Math.round((55.7 + 5.27 * i) * 2) / 2; }

var cg = document.getElementById("candles");
function drawCandles(list, start, y0) {
  list.forEach(function (s, n) {
    var t = s.charAt(0), p = s.slice(1).split(",").map(function (v) { return y0 + v / 3; });
    var x = xAt(start + n);
    el(cg, "line", { x1: x, x2: x, y1: p[0], y2: p[3], "class": t === "g" ? "wk-g" : "wk-r" });
    var h = Math.max(p[2] - p[1], 1);
    el(cg, "rect", { x: x - 2, y: p[1], width: 4, height: h, "class": "c-" + t });
  });
}
drawCandles(A, 0, 150);
drawCandles(B, 54, 170);
drawCandles(C, 115, 100);

var vg = document.getElementById("vols");
function drawVols(list, start, y0) {
  list.forEach(function (s, n) {
    var y = y0 + s.slice(1) / 3, x = xAt(start + n), isRed = s.charAt(0) === "r";
    el(vg, "rect", { x: x - 2.2, y: y, width: 4.4, height: 510 - y, "class": isRed ? "v-r" : "v-g" });
  });
}
drawVols(V1, 0, 430);
drawVols(V2, 54, 430);
drawVols(V3, 119, 410);
```
